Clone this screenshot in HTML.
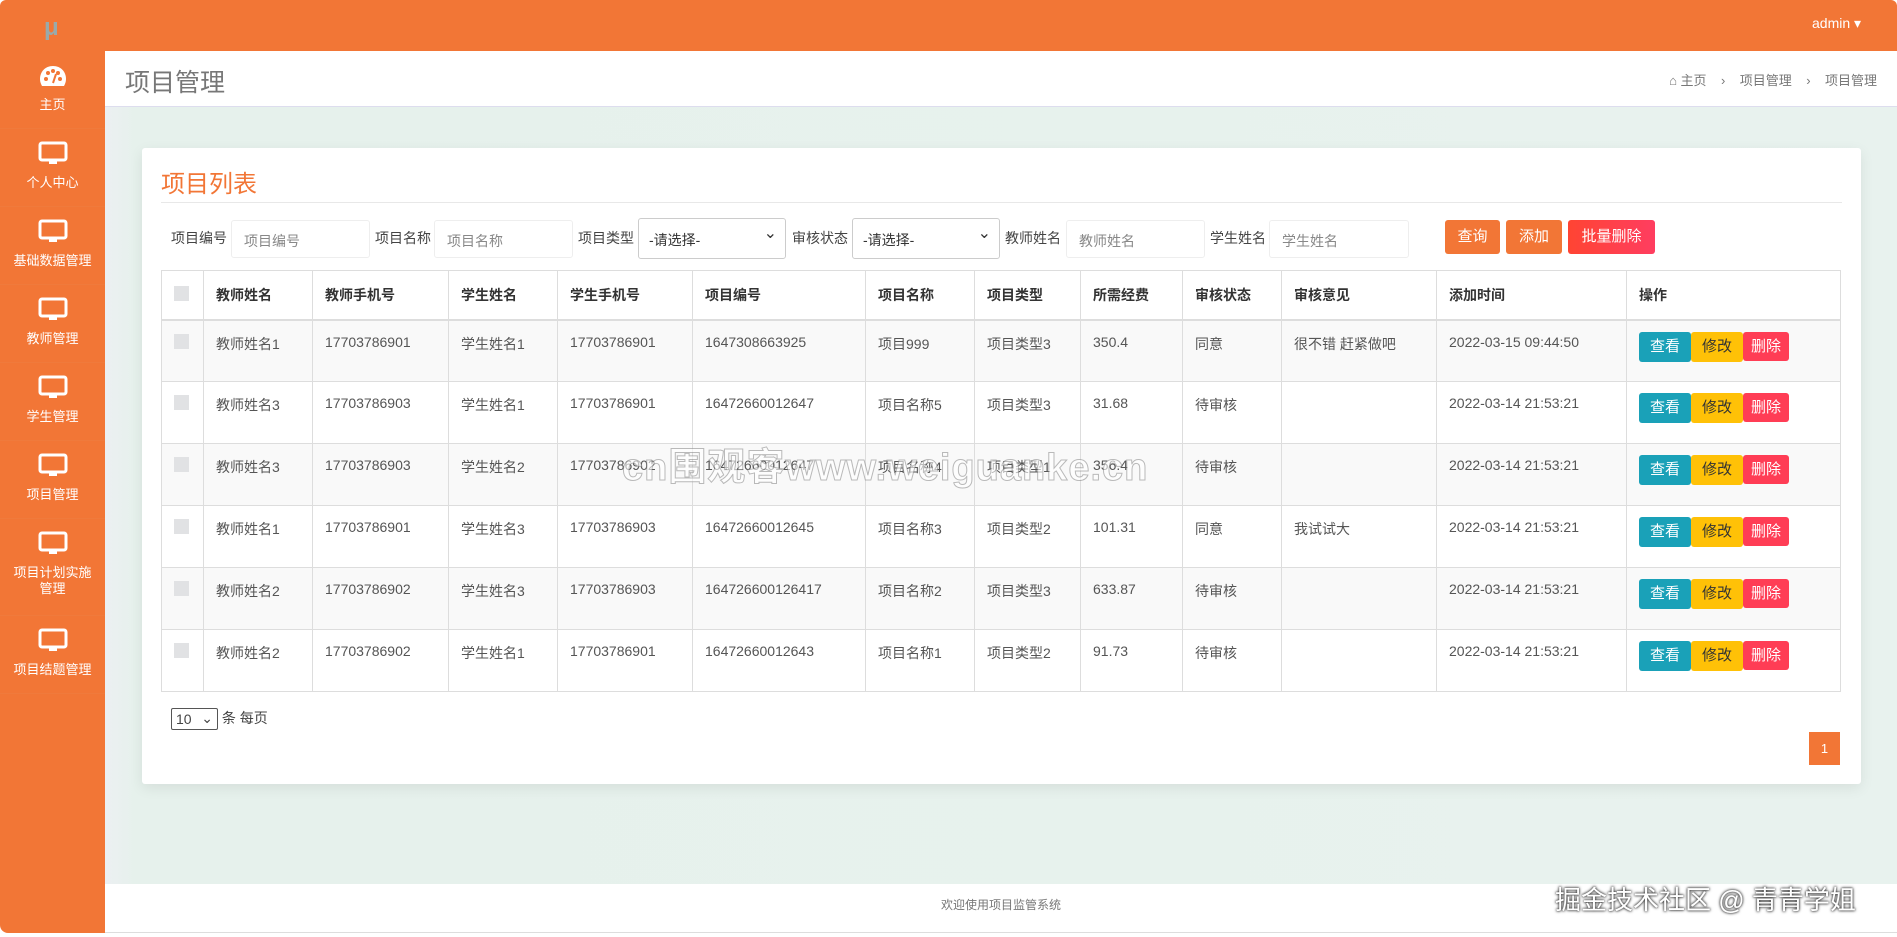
<!DOCTYPE html>
<html><head><meta charset="utf-8">
<style>
*{box-sizing:border-box;margin:0;padding:0}
body{width:1897px;height:937px;overflow:hidden;background:#fff;font-family:"Liberation Sans","Noto Sans CJK SC",sans-serif;color:#555;position:relative}
.top{position:absolute;left:0;top:0;width:1897px;height:51px;background:#f27636;border-radius:6px 6px 0 0}
.logo{position:absolute;left:44px;top:14px;color:#9aa;font-size:24px;font-weight:bold}
.admin{position:absolute;left:1812px;top:15px;color:#fff;font-size:14px}
.side{position:absolute;left:0;top:51px;width:105px;height:882px;background:#f27636;border-radius:0 0 0 8px}
.si{height:78px;border-bottom:1px solid #f07a3c;text-align:center;color:#fff;font-size:13px;position:relative}
.si svg{position:absolute;left:38px;top:12px}
.si span{position:absolute;left:0;right:0;top:46px;line-height:16px}
.hdr{position:absolute;left:105px;top:51px;width:1792px;height:56px;background:#fff;border-bottom:1px solid #dde}
.hdr h1{position:absolute;left:20px;top:12px;font-size:25px;font-weight:normal;color:#777}
.bc{position:absolute;right:20px;top:19px;font-size:13px;color:#777}
.main{position:absolute;left:105px;top:107px;width:1792px;height:777px;background:linear-gradient(90deg,#eceff2 0,#e6f1ec 30px,#e8f2ee 100%)}
.foot{position:absolute;left:105px;top:884px;width:1792px;height:49px;background:#fff;text-align:center;font-size:12px;color:#777;line-height:42px;border-bottom:1px solid #ddd}
.card{position:absolute;left:142px;top:148px;width:1719px;height:636px;background:#fff;border-radius:3px;box-shadow:0 4px 14px rgba(0,0,0,.08)}
.title{position:absolute;left:19px;top:16px;font-size:24px;color:#f27636}
.hr{position:absolute;left:19px;right:19px;top:54px;border-top:1px solid #e8e8e8}
.lbl{position:absolute;top:80px;font-size:14px;color:#444}
.inp{position:absolute;top:72px;height:38px;border:1px solid #eee;border-radius:3px;font-size:14px;color:#888;padding:10px 12px}
.sel{position:absolute;top:70px;height:41px;border:1px solid #ccc;border-radius:3px;font-size:14px;color:#333;padding:11px 10px}
.sel:after{content:"⌄";position:absolute;right:8px;top:4px;font-size:16px}
.btn{position:absolute;top:72px;height:34px;border-radius:3px;color:#fff;font-size:15px;text-align:center;line-height:34px}
table{position:absolute;left:19px;top:122px;border-collapse:collapse;table-layout:fixed;width:1679px;font-size:14px;color:#555}
td,th{border:1px solid #ddd;text-align:left;vertical-align:top;padding:13px 12px;height:62px}
th{height:49px;vertical-align:middle;font-weight:bold;color:#333;border-bottom:2px solid #ddd}
tbody tr:nth-child(odd){background:#f9f9f9}
.cb{display:inline-block;width:15px;height:15px;background:#e1e2e4;margin-left:0}
.ab{display:inline-block;height:30px;line-height:30px;padding:0 11px;font-size:15px;border-radius:3px;margin-top:-2px}
.v{background:#1aa1b8;color:#fff}.e{background:#ffc107;color:#333}.d{background:#ff3d55;color:#fff;height:29px;padding:0 8px}
.pp{position:absolute;left:29px;top:560px;font-size:14px;color:#444}
.pp b{display:inline-block;border:1px solid #555;border-radius:2px;width:47px;height:22px;font-weight:normal;padding:2px 4px;vertical-align:middle;position:relative}
.pg{position:absolute;left:1667px;top:584px;width:31px;height:33px;background:#f27636;color:#fff;font-size:13px;text-align:center;line-height:33px}
</style></head><body>
<div class="top"><div class="logo">μ</div><div class="admin">admin ▾</div></div>
<div class="side">
<div class="si"><svg width="30" height="26" viewBox="0 0 30 26"><path d="M15 3C7 3 2 9 2 16c0 3 1 5 2 7h22c1-2 2-4 2-7 0-7-5-13-13-13z" fill="#fff"/><circle cx="8" cy="16" r="2" fill="#f27636"/><circle cx="10" cy="10" r="2" fill="#f27636"/><circle cx="15" cy="8" r="2" fill="#f27636"/><circle cx="20" cy="10" r="2" fill="#f27636"/><circle cx="22" cy="16" r="2" fill="#f27636"/><path d="M15 20l3-9" stroke="#f27636" stroke-width="2"/></svg><span>主页</span></div>
<div class="si"><svg width="30" height="26" viewBox="0 0 30 26"><rect x="2" y="2" width="26" height="17" rx="2" fill="none" stroke="#fff" stroke-width="3"/><rect x="11" y="19" width="8" height="4" fill="#fff"/></svg><span>个人中心</span></div>
<div class="si"><svg width="30" height="26" viewBox="0 0 30 26"><rect x="2" y="2" width="26" height="17" rx="2" fill="none" stroke="#fff" stroke-width="3"/><rect x="11" y="19" width="8" height="4" fill="#fff"/></svg><span>基础数据管理</span></div>
<div class="si"><svg width="30" height="26" viewBox="0 0 30 26"><rect x="2" y="2" width="26" height="17" rx="2" fill="none" stroke="#fff" stroke-width="3"/><rect x="11" y="19" width="8" height="4" fill="#fff"/></svg><span>教师管理</span></div>
<div class="si"><svg width="30" height="26" viewBox="0 0 30 26"><rect x="2" y="2" width="26" height="17" rx="2" fill="none" stroke="#fff" stroke-width="3"/><rect x="11" y="19" width="8" height="4" fill="#fff"/></svg><span>学生管理</span></div>
<div class="si"><svg width="30" height="26" viewBox="0 0 30 26"><rect x="2" y="2" width="26" height="17" rx="2" fill="none" stroke="#fff" stroke-width="3"/><rect x="11" y="19" width="8" height="4" fill="#fff"/></svg><span>项目管理</span></div>
<div class="si" style="height:97px"><svg width="30" height="26" viewBox="0 0 30 26"><rect x="2" y="2" width="26" height="17" rx="2" fill="none" stroke="#fff" stroke-width="3"/><rect x="11" y="19" width="8" height="4" fill="#fff"/></svg><span>项目计划实施<br>管理</span></div>
<div class="si"><svg width="30" height="26" viewBox="0 0 30 26"><rect x="2" y="2" width="26" height="17" rx="2" fill="none" stroke="#fff" stroke-width="3"/><rect x="11" y="19" width="8" height="4" fill="#fff"/></svg><span>项目结题管理</span></div>
</div>
<div class="hdr"><h1>项目管理</h1><div class="bc">⌂ 主页 &nbsp;&nbsp; › &nbsp;&nbsp; 项目管理 &nbsp;&nbsp; › &nbsp;&nbsp; 项目管理</div></div>
<div class="main">
<div class="card" style="left:37px;top:41px">
<div class="title">项目列表</div><div class="hr"></div>
<div class="lbl" style="left:29px">项目编号</div><div class="inp" style="left:89px;width:139px">项目编号</div>
<div class="lbl" style="left:233px">项目名称</div><div class="inp" style="left:292px;width:139px">项目名称</div>
<div class="lbl" style="left:436px">项目类型</div><div class="sel" style="left:496px;width:148px">-请选择-</div>
<div class="lbl" style="left:650px">审核状态</div><div class="sel" style="left:710px;width:148px">-请选择-</div>
<div class="lbl" style="left:863px">教师姓名</div><div class="inp" style="left:924px;width:139px">教师姓名</div>
<div class="lbl" style="left:1068px">学生姓名</div><div class="inp" style="left:1127px;width:140px">学生姓名</div>
<div class="btn" style="left:1303px;width:55px;background:#f27636">查询</div>
<div class="btn" style="left:1364px;width:56px;background:#f27636">添加</div>
<div class="btn" style="left:1426px;width:87px;background:linear-gradient(90deg,#ff4433,#ff3d60)">批量删除</div>
<table>
<colgroup><col style="width:42px"><col style="width:109px"><col style="width:136px"><col style="width:109px"><col style="width:135px"><col style="width:173px"><col style="width:109px"><col style="width:106px"><col style="width:102px"><col style="width:99px"><col style="width:155px"><col style="width:190px"><col style="width:214px"></colgroup>
<thead><tr><th><span class="cb"></span></th><th>教师姓名</th><th>教师手机号</th><th>学生姓名</th><th>学生手机号</th><th>项目编号</th><th>项目名称</th><th>项目类型</th><th>所需经费</th><th>审核状态</th><th>审核意见</th><th>添加时间</th><th>操作</th></tr></thead>
<tbody>
<tr><td><span class="cb"></span></td><td>教师姓名1</td><td>17703786901</td><td>学生姓名1</td><td>17703786901</td><td>1647308663925</td><td>项目999</td><td>项目类型3</td><td>350.4</td><td>同意</td><td>很不错 赶紧做吧</td><td>2022-03-15 09:44:50</td><td><span class="ab v">查看</span><span class="ab e">修改</span><span class="ab d">删除</span></td></tr>
<tr><td><span class="cb"></span></td><td>教师姓名3</td><td>17703786903</td><td>学生姓名1</td><td>17703786901</td><td>16472660012647</td><td>项目名称5</td><td>项目类型3</td><td>31.68</td><td>待审核</td><td></td><td>2022-03-14 21:53:21</td><td><span class="ab v">查看</span><span class="ab e">修改</span><span class="ab d">删除</span></td></tr>
<tr><td><span class="cb"></span></td><td>教师姓名3</td><td>17703786903</td><td>学生姓名2</td><td>17703786902</td><td>16472660012647</td><td>项目名称4</td><td>项目类型1</td><td>356.4</td><td>待审核</td><td></td><td>2022-03-14 21:53:21</td><td><span class="ab v">查看</span><span class="ab e">修改</span><span class="ab d">删除</span></td></tr>
<tr><td><span class="cb"></span></td><td>教师姓名1</td><td>17703786901</td><td>学生姓名3</td><td>17703786903</td><td>16472660012645</td><td>项目名称3</td><td>项目类型2</td><td>101.31</td><td>同意</td><td>我试试大</td><td>2022-03-14 21:53:21</td><td><span class="ab v">查看</span><span class="ab e">修改</span><span class="ab d">删除</span></td></tr>
<tr><td><span class="cb"></span></td><td>教师姓名2</td><td>17703786902</td><td>学生姓名3</td><td>17703786903</td><td>164726600126417</td><td>项目名称2</td><td>项目类型3</td><td>633.87</td><td>待审核</td><td></td><td>2022-03-14 21:53:21</td><td><span class="ab v">查看</span><span class="ab e">修改</span><span class="ab d">删除</span></td></tr>
<tr><td><span class="cb"></span></td><td>教师姓名2</td><td>17703786902</td><td>学生姓名1</td><td>17703786901</td><td>16472660012643</td><td>项目名称1</td><td>项目类型2</td><td>91.73</td><td>待审核</td><td></td><td>2022-03-14 21:53:21</td><td><span class="ab v">查看</span><span class="ab e">修改</span><span class="ab d">删除</span></td></tr>
</tbody></table>
<div class="pp"><b>10 <span style="position:absolute;right:4px;top:1px">⌄</span></b> 条 每页</div>
<div class="pg">1</div>
</div>
</div>
<div class="foot">欢迎使用项目监管系统</div>
<div style="position:absolute;left:622px;top:436px;font-size:38px;font-weight:bold;color:rgba(255,255,255,.6);-webkit-text-stroke:1px rgba(120,120,120,.5);letter-spacing:1px">cn围观客www.weiguanke.cn</div>
<div style="position:absolute;left:1555px;top:880px;font-size:26px;color:#fff;text-shadow:0 0 2px #333,0 0 3px #333">掘金技术社区 @ 青青学姐</div>
</body></html>
